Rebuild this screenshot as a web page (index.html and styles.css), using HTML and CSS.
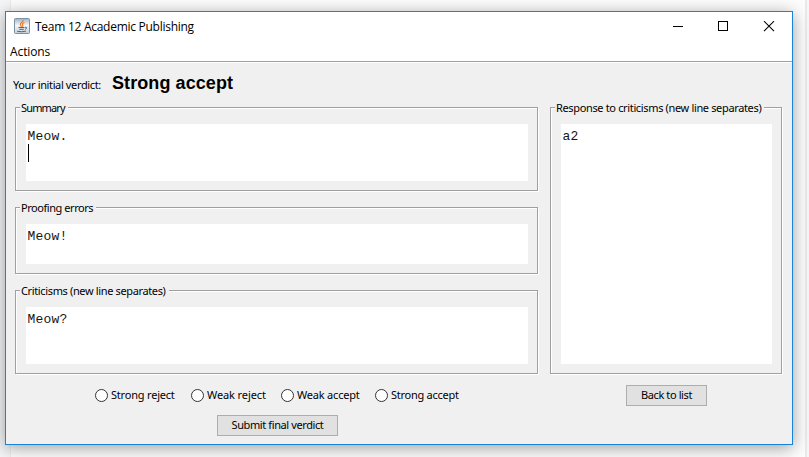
FILE: index.html
```html
<!DOCTYPE html>
<html lang="en">
<head>
<meta charset="utf-8">
<title>Team 12 Academic Publishing</title>
<link rel="stylesheet" href="styles.css">
</head>
<body>
<div class="desktop">
<div class="window">
  <header class="titlebar">
    <svg class="app-icon" width="16" height="16" viewBox="0 0 16 16">
      <defs><linearGradient id="tile" x1="0" y1="0" x2="0" y2="1"><stop offset="0" stop-color="#9fb1c0"/><stop offset=".45" stop-color="#f4f6f8"/><stop offset="1" stop-color="#c3ced7"/></linearGradient></defs>
      <rect x=".5" y=".5" width="15" height="15" rx="1" fill="url(#tile)" stroke="#7992a6"/>
      <path d="M9.300 2C9.800 4 6 4.600 6.300 6.500C6.500 7.500 7.300 8 7.500 8.800M10.500 4.500C8.500 5.200 8 6 8.700 7C9.200 7.800 8.700 8.300 8.300 8.700" fill="none" stroke="#ee7a22" stroke-width="1.200"/>
      <path d="M4.500 9.500H10.500M5.300 11.300H9.800M3.200 13.300Q8 14.300 12 13.100M11 9.300C13.500 8.800 13 11 11 11.300" fill="none" stroke="#47698a" stroke-width="1"/>
    </svg>
    <span class="title">Team 12 Academic Publishing</span>
    <svg class="controls" width="103" height="12" viewBox="0 0 103 12">
      <path d="M0 5.500H10" stroke="#000"/>
      <rect x="45.500" y=".5" width="9" height="9" fill="none" stroke="#000"/>
      <path d="M91 .2L101 10.200M101 .2L91 10.200" stroke="#000" stroke-width="1.100"/>
    </svg>
  </header>
  <nav class="menubar"><span class="menu">Actions</span></nav>
  <main class="content">
    <div class="verdict"><span class="verdict-label">Your initial verdict:</span><strong class="verdict-value">Strong accept</strong></div>
    <div class="columns">
      <div class="review">
        <section class="group tall"><h2 class="legend summary">Summary</h2><div class="field">Meow.<br><span class="caret"></span></div></section>
        <section class="group short"><h2 class="legend proofing">Proofing errors</h2><div class="field">Meow!</div></section>
        <section class="group tall"><h2 class="legend criticisms">Criticisms (new line separates)</h2><div class="field">Meow?</div></section>
        <div class="choices">
          <label class="choice strong-reject"><i class="radio"></i><span>Strong reject</span></label>
          <label class="choice weak-reject"><i class="radio"></i><span>Weak reject</span></label>
          <label class="choice weak-accept"><i class="radio"></i><span>Weak accept</span></label>
          <label class="choice strong-accept"><i class="radio"></i><span>Strong accept</span></label>
        </div>
        <button class="button submit">Submit final verdict</button>
      </div>
      <div class="response">
        <section class="group full"><h2 class="legend replies">Response to criticisms (new line separates)</h2><div class="field">a2</div></section>
        <button class="button back">Back to list</button>
      </div>
    </div>
  </main>
</div>
</div>
</body>
</html>
```
FILE: styles.css
```css
* { box-sizing: border-box; }
body { margin: 0; }
.desktop {
  width: 809px; height: 457px; padding: 11px 0 0 5px; overflow: hidden;
  background: linear-gradient(90deg, #f5f6f8 0 10px, #ececee 10px 11px, #fdfdfd 11px 805px, #e9eaed 805px 807px, #f6f7f9 807px);
}
.window {
  width: 788px; height: 434px; border: 1px solid #1883d7; background: #f0f0f0;
  box-shadow: 0 3px 16px rgba(0,0,0,.38);
  font: 11px/14px "Noto Sans", sans-serif; color: #000;
}
.titlebar { height: 30px; background: #fff; display: flex; align-items: flex-start; padding: 6px 0 0 8px; }
.app-icon { flex: none; }
.title { margin: 0 0 0 5px; font: 12px/17px "Open Sans", sans-serif; letter-spacing: -.27px; white-space: nowrap; flex: 1; }
.controls { flex: none; margin: 3px 16px 0 0; }
.menubar { height: 21px; background: #fff; border-bottom: 1px solid #fff; box-shadow: inset 0 -1px #a0a0a0; padding: 2px 0 0 4px; }
.menu { font: 12px/16px "Open Sans", sans-serif; letter-spacing: -.1px; }
.content { padding: 0 0 0 9px; }
.verdict { height: 44px; display: flex; padding: 10px 0 0 0; margin-left: -2px; white-space: nowrap; }
.verdict-label { width: 99px; line-height: 24px; letter-spacing: -.37px; }
.verdict-value { font: bold 18px/20px "Liberation Sans", sans-serif; letter-spacing: .08px; }
.columns { display: flex; gap: 12px; }
.review { width: 523px; display: flex; flex-direction: column; }
.response { width: 232px; display: flex; flex-direction: column; }
.group {
  border: 1px solid #a0a0a0; box-shadow: 1px 1px #fff, inset 1px 1px #fff;
  padding: 0 9px 9px 10px; display: flex; flex-direction: column;
}
.tall { height: 84px; margin-bottom: 16px; }
.short { height: 67px; margin-bottom: 16px; }
.full { height: 267px; margin-bottom: 11px; }
.legend {
  font: 11px/14px "Noto Sans", sans-serif; margin: -7px 0 9px -6px; padding: 0 3px 0 1px;
  align-self: flex-start; background: #f0f0f0; white-space: nowrap; height: 14px;
}
.summary { letter-spacing: -.85px; }
.proofing { letter-spacing: -.45px; }
.criticisms { letter-spacing: -.36px; }
.replies { letter-spacing: -.35px; }
.field { flex: 1; background: #fff; padding: 4px 0 0 1.600px; font: 13px/17px "Liberation Mono", monospace; letter-spacing: .2px; color: #151515; }
.caret { display: block; width: 1px; height: 18px; margin-top: -1px; background: #000; }
.choices { display: flex; height: 14px; margin: -1px 0 12px 80px; }
.choice { display: flex; gap: 3px; white-space: nowrap; letter-spacing: -.26px; line-height: 12px; }
.radio { flex: none; width: 13px; height: 13px; border: 1px solid #333; border-radius: 50%; background: #fff; }
.strong-reject { width: 96px; letter-spacing: -.2px; }
.weak-reject { width: 90px; letter-spacing: -.1px; }
.weak-accept { width: 94px; letter-spacing: -.2px; }
.button {
  height: 21px; padding: 0 0 2px; border: 1px solid #adadad; background: #e1e1e1; color: #000;
  font: 11px/17px "Noto Sans", sans-serif; letter-spacing: -.4px; white-space: nowrap;
}
.submit { width: 121px; margin-left: 202px; }
.back { width: 81px; margin-left: 76px; }
```
